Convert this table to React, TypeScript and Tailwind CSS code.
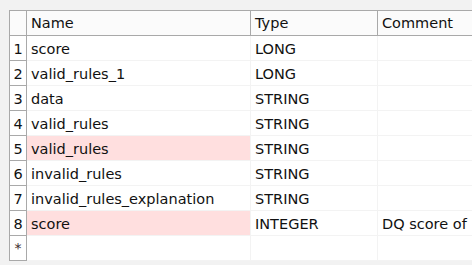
import React from "react";

const rows: { name: string; type: string; comment: string; hl: boolean }[] = [
  { name: "score", type: "LONG", comment: "", hl: false },
  { name: "valid_rules_1", type: "LONG", comment: "", hl: false },
  { name: "data", type: "STRING", comment: "", hl: false },
  { name: "valid_rules", type: "STRING", comment: "", hl: false },
  { name: "valid_rules", type: "STRING", comment: "", hl: true },
  { name: "invalid_rules", type: "STRING", comment: "", hl: false },
  { name: "invalid_rules_explanation", type: "STRING", comment: "", hl: false },
  { name: "score", type: "INTEGER", comment: "DQ score of", hl: true },
];

export default function App() {
  return (
    <div
      className="w-[472px] h-[265px] overflow-hidden bg-[#f2f2f2] pt-[10px] pl-[9px] text-[14.5px] text-[#111]"
      style={{ fontFamily: '"DejaVu Sans", sans-serif' }}
    >
      <div className="w-[600px] bg-white">
        <div className="flex h-[26px] border-y border-[#a9a9a9] bg-[#fbfbfb]">
          <div className="w-[18px] shrink-0 border-x border-[#a9a9a9]" />
          <div className="w-[224px] shrink-0 border-r border-[#a9a9a9] pl-[4px] leading-[25px]">Name</div>
          <div className="w-[127px] shrink-0 border-r border-[#a9a9a9] pl-[4px] leading-[25px]">Type</div>
          <div className="flex-1 pl-[4px] leading-[25px]">Comment</div>
        </div>
        {rows.map((r, i) => (
          <div key={i} className="flex h-[25px] border-b border-[#f3f3f3]">
            <div className="w-[18px] shrink-0 border-x border-b border-[#a9a9a9] -mb-px bg-white text-center leading-[26px]">
              {i + 1}
            </div>
            <div
              className={`w-[224px] shrink-0 border-r border-[#f3f3f3] pl-[4px] leading-[26px] ${
                r.hl ? "bg-[#ffdfdf]" : ""
              }`}
            >
              {r.name}
            </div>
            <div className="w-[127px] shrink-0 border-r border-[#f3f3f3] pl-[4px] leading-[26px]">{r.type}</div>
            <div className="flex-1 pl-[4px] leading-[26px] whitespace-nowrap">{r.comment}</div>
          </div>
        ))}
        <div className="flex h-[25px] border-b border-[#f3f3f3]">
          <div className="w-[18px] shrink-0 border-x border-b border-[#a9a9a9] -mb-px bg-white text-center leading-[24px] text-[14px] text-[#3a2a2a]">
            *
          </div>
          <div className="w-[224px] shrink-0 border-r border-[#f3f3f3]" />
          <div className="w-[127px] shrink-0 border-r border-[#f3f3f3]" />
          <div className="flex-1" />
        </div>
      </div>
    </div>
  );
}
